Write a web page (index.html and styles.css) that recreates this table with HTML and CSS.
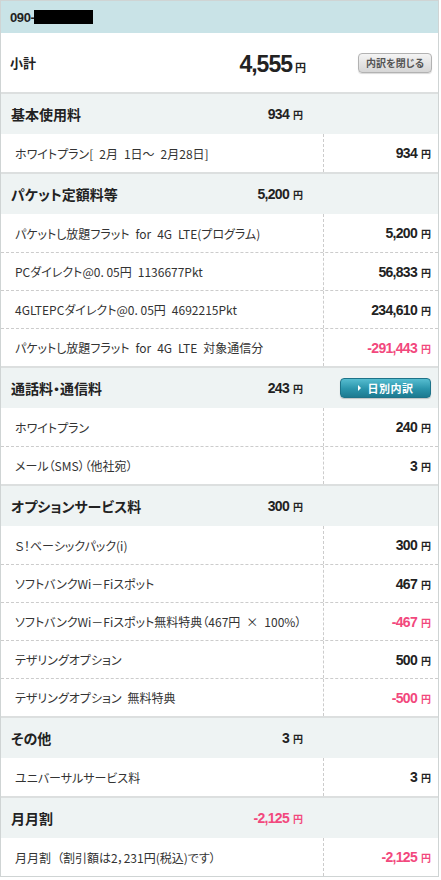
FILE: index.html
```html
<!DOCTYPE html>
<html lang="ja">
<head>
<meta charset="utf-8">
<title>明細</title>
<link rel="stylesheet" href="styles.css">
</head>
<body>
<div class="bill">
  <div class="line-head"><span class="tel">090-</span><span class="redact"></span></div>

  <div class="subtotal">
    <div class="sub-left">
      <span class="sub-label">小計</span>
      <span class="sub-amount">4,555<small>円</small></span>
    </div>
    <div class="sub-right"><button class="btn-gray" type="button">内訳を閉じる</button></div>
  </div>

  <section class="group">
    <div class="g-head">
      <div class="g-left"><span class="g-title">基本使用料</span><span class="amt">934<small>円</small></span></div>
      <div class="g-right"></div>
    </div>
    <div class="row"><div class="r-label">ホワイトプラン[&ensp;2月&ensp;1日〜&ensp;2月28日]</div><div class="r-amt"><span class="amt">934<small>円</small></span></div></div>
  </section>

  <section class="group">
    <div class="g-head">
      <div class="g-left"><span class="g-title">パケット定額料等</span><span class="amt">5,200<small>円</small></span></div>
      <div class="g-right"></div>
    </div>
    <div class="row"><div class="r-label">パケットし放題フラット&ensp;for&ensp;4G&ensp;LTE(プログラム)</div><div class="r-amt"><span class="amt">5,200<small>円</small></span></div></div>
    <div class="row"><div class="r-label">PCダイレクト@0.&nbsp;05円&ensp;1136677Pkt</div><div class="r-amt"><span class="amt">56,833<small>円</small></span></div></div>
    <div class="row"><div class="r-label">4GLTEPCダイレクト@0.&nbsp;05円&ensp;4692215Pkt</div><div class="r-amt"><span class="amt">234,610<small>円</small></span></div></div>
    <div class="row"><div class="r-label">パケットし放題フラット&ensp;for&ensp;4G&ensp;LTE&ensp;対象通信分</div><div class="r-amt"><span class="amt neg">-291,443<small>円</small></span></div></div>
  </section>

  <section class="group">
    <div class="g-head">
      <div class="g-left"><span class="g-title">通話料・通信料</span><span class="amt">243<small>円</small></span></div>
      <div class="g-right"><button class="btn-teal" type="button"><span class="tri"></span>日別内訳</button></div>
    </div>
    <div class="row"><div class="r-label">ホワイトプラン</div><div class="r-amt"><span class="amt">240<small>円</small></span></div></div>
    <div class="row"><div class="r-label">メール（SMS）（他社宛）</div><div class="r-amt"><span class="amt">3<small>円</small></span></div></div>
  </section>

  <section class="group">
    <div class="g-head">
      <div class="g-left"><span class="g-title">オプションサービス料</span><span class="amt">300<small>円</small></span></div>
      <div class="g-right"></div>
    </div>
    <div class="row"><div class="r-label">Ｓ！ベーシックパック(i)</div><div class="r-amt"><span class="amt">300<small>円</small></span></div></div>
    <div class="row"><div class="r-label">ソフトバンクWi－Fiスポット</div><div class="r-amt"><span class="amt">467<small>円</small></span></div></div>
    <div class="row"><div class="r-label">ソフトバンクWi－Fiスポット無料特典（467円&ensp;×&ensp;100%）</div><div class="r-amt"><span class="amt neg">-467<small>円</small></span></div></div>
    <div class="row"><div class="r-label">テザリングオプション</div><div class="r-amt"><span class="amt">500<small>円</small></span></div></div>
    <div class="row"><div class="r-label">テザリングオプション&ensp;無料特典</div><div class="r-amt"><span class="amt neg">-500<small>円</small></span></div></div>
  </section>

  <section class="group">
    <div class="g-head">
      <div class="g-left"><span class="g-title">その他</span><span class="amt">3<small>円</small></span></div>
      <div class="g-right"></div>
    </div>
    <div class="row"><div class="r-label">ユニバーサルサービス料</div><div class="r-amt"><span class="amt">3<small>円</small></span></div></div>
  </section>

  <section class="group">
    <div class="g-head">
      <div class="g-left"><span class="g-title">月月割</span><span class="amt neg">-2,125<small>円</small></span></div>
      <div class="g-right"></div>
    </div>
    <div class="row"><div class="r-label">月月割&ensp;（割引額は2，231円(税込)です）</div><div class="r-amt"><span class="amt neg">-2,125<small>円</small></span></div></div>
  </section>
</div>
</body>
</html>
```

FILE: styles.css
```css
* { box-sizing: border-box; }

body {
  margin: 0;
  background: #ffffff;
  color: #333333;
  font-family: "Liberation Sans", "Noto Sans CJK JP", sans-serif;
}

.bill {
  width: 439px;
  border: 1px solid #cfd4d4;
}

.line-head {
  height: 32px;
  background: #c9e3e7;
  display: flex;
  align-items: center;
  padding-left: 9px;
}

.tel {
  font-size: 13px;
  font-weight: bold;
  letter-spacing: -0.4px;
  color: #222;
}

.redact {
  display: inline-block;
  width: 59px;
  height: 14px;
  background: #000;
}

.subtotal {
  height: 61px;
  display: grid;
  grid-template-columns: 322px 1fr;
  border-bottom: 2px solid #dcdfdf;
}

.sub-left {
  display: flex;
  align-items: center;
  justify-content: space-between;
  padding: 0 17px 0 9px;
}

.sub-label {
  font-family: "Noto Sans CJK JP", sans-serif;
  font-size: 13px;
  font-weight: bold;
  color: #222;
}

.sub-amount {
  font-size: 23px;
  font-weight: bold;
  letter-spacing: -1px;
  color: #222;
  padding-top: 3px;
}

.sub-amount small {
  font-family: "Noto Sans CJK JP", sans-serif;
  font-size: 11px;
  letter-spacing: 0;
  margin-left: 3px;
  font-weight: bold;
}

.sub-right {
  display: flex;
  align-items: center;
  justify-content: flex-end;
  padding-right: 6px;
}

.btn-gray {
  width: 74px;
  height: 20px;
  padding: 0;
  border: 1px solid #b2b2b2;
  border-radius: 4px;
  background: linear-gradient(#f4f4f4, #d6d6d6);
  box-shadow: 0 1px 1px rgba(0,0,0,0.15);
  font-family: "Noto Sans CJK JP", sans-serif;
  font-feature-settings: "palt";
  font-size: 10px;
  font-weight: bold;
  color: #555;
  line-height: 18px;
}

.group + .group {
  border-top: 2px solid #dcdfdf;
}

.g-head {
  height: 40px;
  display: grid;
  grid-template-columns: 322px 1fr;
  background: #eef3f3;
}

.g-left {
  display: flex;
  align-items: center;
  justify-content: space-between;
  padding: 0 20px 0 10px;
}

.g-title {
  font-family: "Noto Sans CJK JP", sans-serif;
  font-feature-settings: "palt";
  font-size: 14px;
  font-weight: bold;
  color: #222;
}

.g-right {
  display: flex;
  align-items: center;
  justify-content: flex-end;
  padding-right: 7px;
}

.btn-teal {
  width: 91px;
  height: 20px;
  padding: 0;
  border: 1px solid #1d7389;
  border-radius: 4px;
  background: linear-gradient(#56bdd0, #2a94ab 55%, #1d7a90);
  box-shadow: 0 1px 1px rgba(0,0,0,0.2);
  color: #fff;
  font-family: "Noto Sans CJK JP", sans-serif;
  font-size: 11px;
  font-weight: bold;
  letter-spacing: 0.5px;
  display: flex;
  align-items: center;
  justify-content: center;
  gap: 7px;
}

.tri {
  width: 0;
  height: 0;
  border-left: 3px solid #fff;
  border-top: 3px solid transparent;
  border-bottom: 3px solid transparent;
}

.amt {
  font-size: 14px;
  font-weight: bold;
  letter-spacing: -0.7px;
  color: #222;
}

.amt small {
  font-family: "Noto Sans CJK JP", sans-serif;
  font-size: 10px;
  font-weight: bold;
  letter-spacing: 0;
  margin-left: 4px;
}

.amt.neg { color: #f2487d; }

.row {
  height: 38px;
  display: grid;
  grid-template-columns: 322px 1fr;
}

.row + .row {
  border-top: 1px dashed #cccccc;
}

.r-label {
  display: flex;
  align-items: center;
  padding-left: 14px;
  font-family: "Noto Sans CJK JP", sans-serif;
  font-feature-settings: "palt";
  font-size: 12px;
  color: #333;
  white-space: nowrap;
}

.r-amt {
  display: flex;
  align-items: center;
  justify-content: flex-end;
  padding-right: 7px;
  border-left: 1px dashed #cccccc;
}
```
